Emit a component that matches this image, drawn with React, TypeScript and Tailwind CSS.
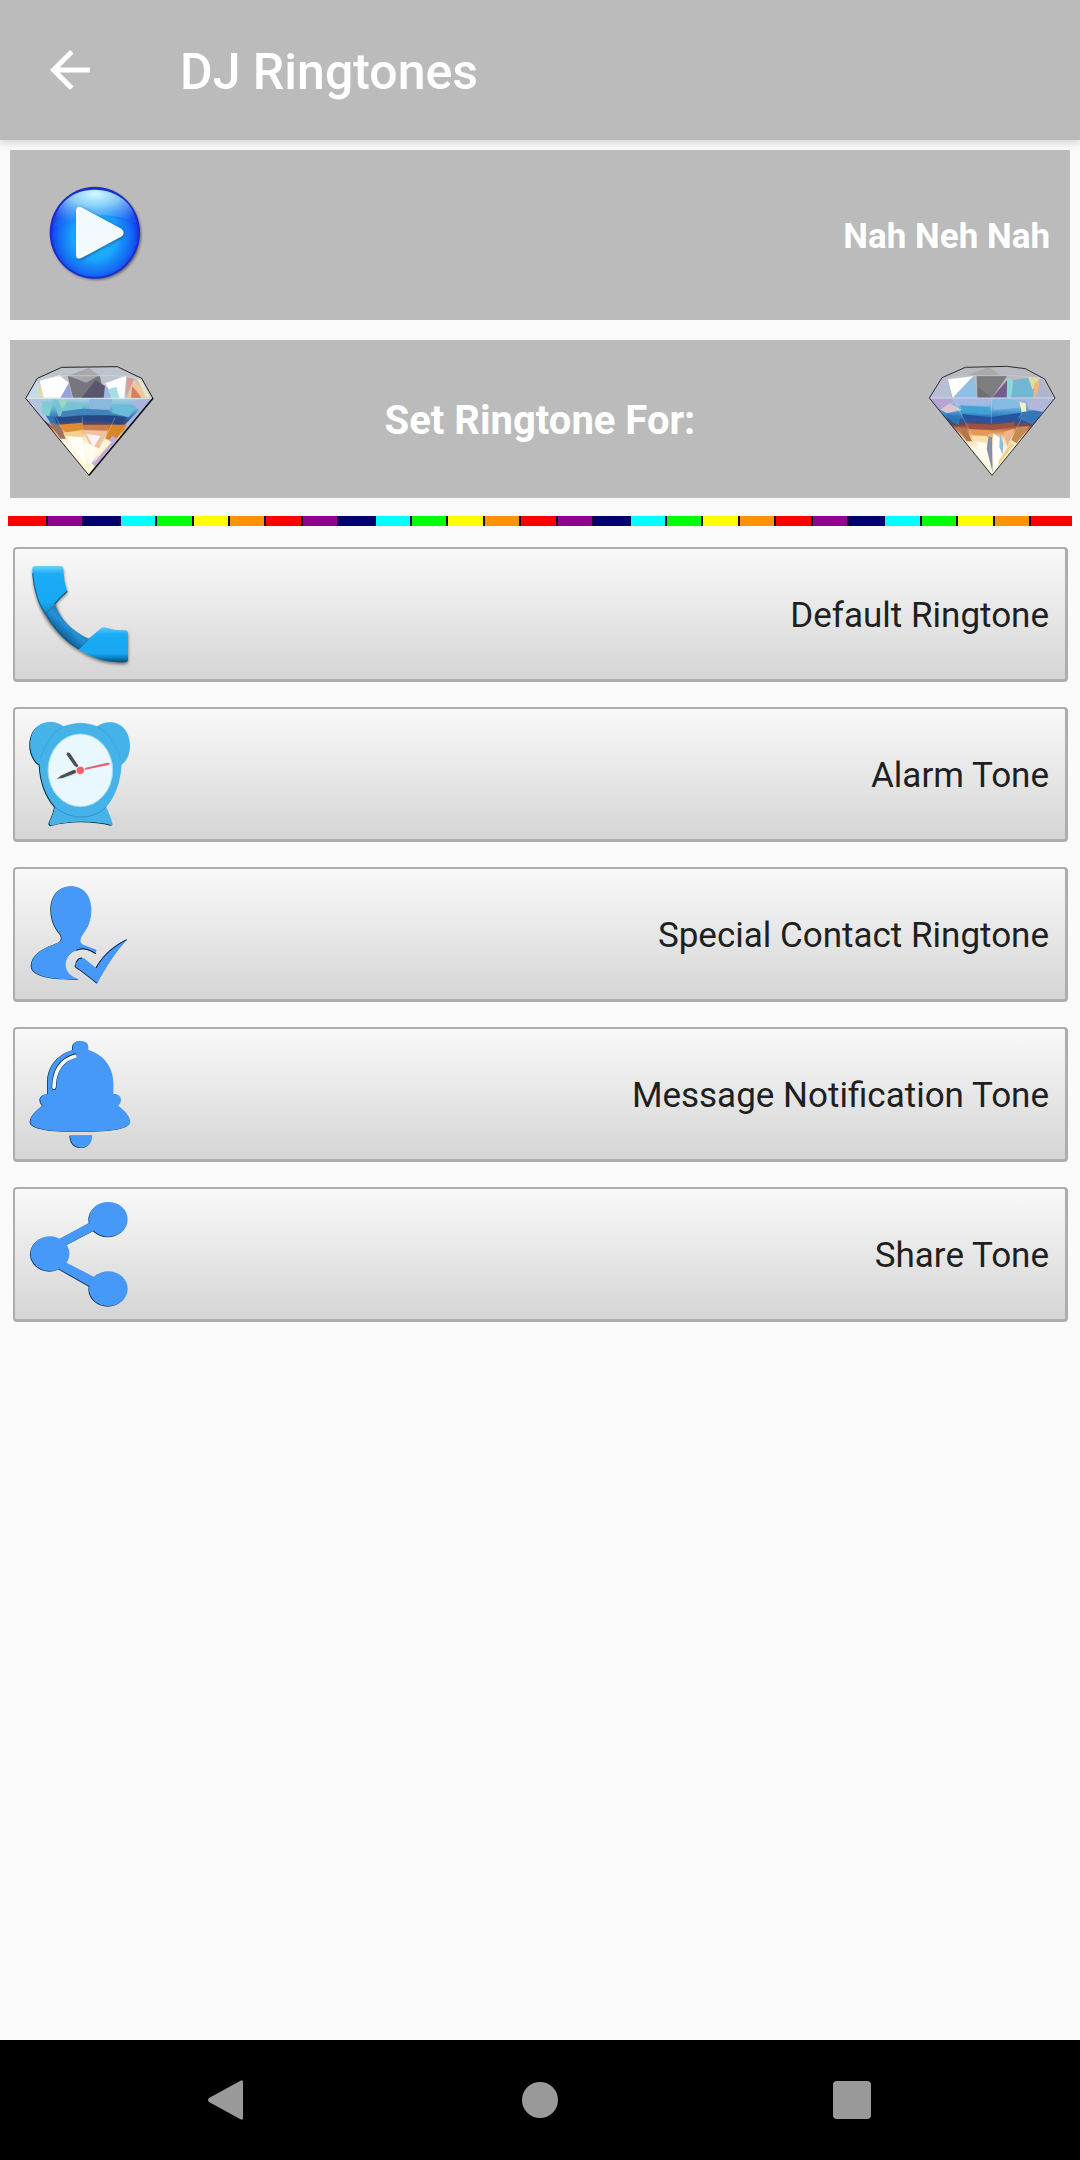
import type { ReactNode } from "react";

/** Repeating colours of the divider strip */
const RAINBOW = [
  "bg-[#ff0000]",
  "bg-[#920092]",
  "bg-[#000070]",
  "bg-[#00ffff]",
  "bg-[#00ff00]",
  "bg-[#ffff00]",
  "bg-[#ff9200]",
];

function PlayIcon() {
  return (
    <svg viewBox="144 138 285 294" className="h-[98px] w-[95px]" aria-hidden>
      <defs>
        <radialGradient id="play-ball" cx="0.5" cy="0.55" r="0.52">
          <stop offset="0" stopColor="#22c4ff" />
          <stop offset="0.5" stopColor="#1aa4fc" />
          <stop offset="0.82" stopColor="#1468f4" />
          <stop offset="1" stopColor="#1238e8" />
        </radialGradient>
        <radialGradient id="play-gloss" cx="0.5" cy="0.12" r="0.8">
          <stop offset="0" stopColor="#d2fbff" />
          <stop offset="0.4" stopColor="#9adffb" stopOpacity="0.85" />
          <stop offset="0.75" stopColor="#6cb0f8" stopOpacity="0.5" />
          <stop offset="1" stopColor="#4a8cf4" stopOpacity="0.15" />
        </radialGradient>
        <filter id="play-blur" x="-20%" y="-20%" width="140%" height="140%">
          <feGaussianBlur stdDeviation="4" />
        </filter>
      </defs>
      <ellipse cx="289" cy="283" rx="134" ry="136" fill="#000" opacity="0.5" filter="url(#play-blur)" />
      <ellipse cx="284.500" cy="278" rx="135.500" ry="138" fill="#1c2cd0" />
      <ellipse cx="284.500" cy="279" rx="129" ry="132" fill="url(#play-ball)" />
      <path
        d="M160 262C164 196 214 149 284 149S406 196 409 250C360 225 310 222 260 230C215 238 185 250 160 262Z"
        fill="url(#play-gloss)"
      />
      <path
        d="M231 216Q231 200 246 204L366 268Q378 279 367 292L246 358Q231 361 231 346Z"
        fill="#022a70"
        opacity="0.6"
        filter="url(#play-blur)"
      />
      <path d="M228 214Q228 198 243 201L364 266Q377 277 366 289L243 355Q228 359 228 344Z" fill="#f3fafe" />
    </svg>
  );
}

function LeftDiamond() {
  return (
    <svg viewBox="78 96 390 342" className="h-[114px] w-[130px] overflow-visible" aria-hidden>
      <defs>
        <clipPath id="ld-clip">
          <path d="M80 205L115 145L188 112L355 110L428 145L462 205L270 436Z" />
        </clipPath>
        <linearGradient id="ld-body" x1="0" y1="205" x2="0" y2="436" gradientUnits="userSpaceOnUse">
          <stop offset="0" stopColor="#a9cfe4" />
          <stop offset="0.12" stopColor="#6fb8d0" />
          <stop offset="0.22" stopColor="#3f84bd" />
          <stop offset="0.29" stopColor="#2a4f94" />
          <stop offset="0.34" stopColor="#6a4352" />
          <stop offset="0.4" stopColor="#d9822f" />
          <stop offset="0.48" stopColor="#f8d79d" />
          <stop offset="0.6" stopColor="#fffaf0" />
          <stop offset="1" stopColor="#fdf4c0" />
        </linearGradient>
        <filter id="ld-soft">
          <feGaussianBlur stdDeviation="1.500" />
        </filter>
      </defs>
      <g clipPath="url(#ld-clip)">
        <path d="M60 90H480V206H60Z" fill="#bfc3cc" />
        <path d="M60 205H480V440H60Z" fill="url(#ld-body)" />
        <g filter="url(#ld-soft)">
          <path d="M80 205L110 148L126 165L130 205Z" fill="#c9dbe2" />
          <path d="M118 185L126 150L134 205L124 205Z" fill="#dcdda6" />
          <path d="M122 152L182 136L210 160L188 203L134 203Z" fill="#fff" />
          <path d="M210 158L220 203H184Z" fill="#98a3dc" />
          <path d="M206 137H302L318 203H222Z" fill="#77767c" />
          <path d="M290 150L318 168V203H248Z" fill="#5c5470" />
          <path d="M206 137L262 158L300 136L270 114Z" fill="#a8a8aa" />
          <path d="M318 160L382 137L376 205H346Z" fill="#fcfeff" />
          <path d="M318 165L352 205H314Z" fill="#9db7de" />
          <path d="M328 178L352 170L362 205H336Z" fill="#a5dfe5" />
          <path d="M384 140L406 146L380 200Z" fill="#dc9a98" />
          <path d="M406 148L448 203H384Z" fill="#efc79b" />
          <path d="M400 168L428 204H396Z" fill="#d77d62" />
          <path d="M414 146L428 150L454 203L440 200Z" fill="#e7e6c4" />
          <path d="M80 205L135 208L160 290L120 258Z" fill="#b5c4e2" />
          <path d="M128 212L160 222L150 262L128 248Z" fill="#7ed0d0" />
          <path d="M160 208L252 222L246 250L180 262Z" fill="#79c4d4" />
          <path d="M176 210L206 212L190 236Z" fill="#9dd7bd" />
          <path d="M270 206L340 208L330 246L272 240Z" fill="#8cb8dc" />
          <path d="M340 222L420 226L388 262L340 248Z" fill="#6bbcd8" />
          <path d="M392 214L462 205L378 306L370 292L420 240Z" fill="#a9b5dc" />
          <path d="M140 256L180 268L178 290L156 282Z" fill="#2f74b4" />
          <path d="M150 276L184 288L200 326L184 326Z" fill="#9c7362" />
          <path d="M166 262L250 248L340 256L384 262L366 286L330 276L250 272L172 280Z" fill="#274a86" />
          <path d="M190 244L250 236L330 240L340 256L250 256L184 262Z" fill="#3f82bc" />
          <path d="M178 284L250 278L252 314L208 312Z" fill="#dc8c34" />
          <path d="M194 308L250 300L252 322L210 322Z" fill="#f6d08c" />
          <path d="M200 318L250 322L262 410Z" fill="#fffdf6" />
          <path d="M252 284L334 284L322 304L254 304Z" fill="#c87e4c" />
          <path d="M252 300L326 302L300 356L270 340Z" fill="#efc2a0" />
          <path d="M262 312L304 318L284 352Z" fill="#fdf2f8" />
          <path d="M258 340L292 356L272 424Z" fill="#fffdf0" />
          <path d="M334 284L384 284L348 334L318 326Z" fill="#d8862e" />
          <path d="M340 318L356 326L288 410L278 400Z" fill="#c2a9dc" />
          <path d="M322 330L338 336L282 400Z" fill="#fff6c8" />
        </g>
        <path d="M80 205H462" stroke="#dff0f6" strokeWidth="3" opacity="0.8" />
        <path d="M170 262L268 432M250 260L256 400M348 262L272 430" stroke="#fff" strokeWidth="2" opacity="0.35" />
        <path d="M115 147L205 137H345L428 146" stroke="#d8d8e6" strokeWidth="3" fill="none" opacity="0.6" />
      </g>
      <path d="M80 205L115 145L188 112L355 110L428 145L462 205L270 436Z" fill="none" stroke="#22232d" strokeWidth="3" />
      <path d="M462 205L270 436" stroke="#14141e" strokeWidth="5" />
    </svg>
  );
}

function RightDiamond() {
  return (
    <svg viewBox="75 96 390 342" className="h-[114px] w-[130px] overflow-visible" aria-hidden>
      <defs>
        <clipPath id="rd-clip">
          <path d="M88 204L126 143L196 112L320 109L376 116L434 147L465 204L276 436Z" />
        </clipPath>
        <linearGradient id="rd-body" x1="0" y1="204" x2="0" y2="436" gradientUnits="userSpaceOnUse">
          <stop offset="0" stopColor="#b4b4dc" />
          <stop offset="0.1" stopColor="#7bbcdd" />
          <stop offset="0.2" stopColor="#3f8fcd" />
          <stop offset="0.29" stopColor="#26559c" />
          <stop offset="0.35" stopColor="#75444c" />
          <stop offset="0.42" stopColor="#d98548" />
          <stop offset="0.52" stopColor="#f6d9a6" />
          <stop offset="0.68" stopColor="#fffbee" />
          <stop offset="1" stopColor="#fdf5c8" />
        </linearGradient>
        <filter id="rd-soft">
          <feGaussianBlur stdDeviation="1.500" />
        </filter>
      </defs>
      <g clipPath="url(#rd-clip)">
        <path d="M60 90H480V206H60Z" fill="#b9bac0" />
        <path d="M60 204H480V440H60Z" fill="url(#rd-body)" />
        <g filter="url(#rd-soft)">
          <path d="M88 204L122 148L144 150L154 204Z" fill="#b6bfd4" />
          <path d="M144 148L220 138L158 203Z" fill="#fff" />
          <path d="M222 138L232 203H160Z" fill="#8ebfe4" />
          <path d="M230 137H322L276 203H232Z" fill="#7d7d7f" />
          <path d="M196 137L268 112L300 136Z" fill="#a9a9aa" />
          <path d="M234 170L274 203H234Z" fill="#6e6e73" />
          <path d="M322 150L322 203H276Z" fill="#735c90" />
          <path d="M322 140L358 170L330 203H320Z" fill="#8fd5dc" />
          <path d="M340 150L408 140L398 203H334Z" fill="#72b7d2" />
          <path d="M384 140L420 142L398 180Z" fill="#e4d9a0" />
          <path d="M404 156L428 162L402 202Z" fill="#f1b678" />
          <path d="M420 150L462 204H410Z" fill="#aeb5cc" />
          <path d="M88 204L160 206L150 246L122 240Z" fill="#b8a4d0" />
          <path d="M122 238L150 220L186 240L140 250Z" fill="#d9c4d0" />
          <path d="M160 206L272 208L270 226L170 228Z" fill="#a6b9e4" />
          <path d="M180 226L270 232V254L188 246Z" fill="#3fa3d6" />
          <path d="M278 206L340 206L366 232L280 240Z" fill="#84bbe2" />
          <path d="M136 250L180 262L176 286L158 276Z" fill="#2c78b4" />
          <path d="M186 252L270 262L364 248L350 270L276 278L192 270Z" fill="#27549f" />
          <path d="M358 216L376 220L380 248L366 250Z" fill="#fff0c4" />
          <path d="M366 246L430 238L400 284L366 270Z" fill="#3477b9" />
          <path d="M384 212L464 204L430 246L386 238Z" fill="#b2b6d8" />
          <path d="M168 290L200 298L216 334L200 334Z" fill="#b5764d" />
          <path d="M196 280L272 284L346 276L340 292L276 300L206 296Z" fill="#9c5243" />
          <path d="M206 298L272 302L262 320L216 318Z" fill="#e69a54" />
          <path d="M214 316L262 318L256 348L232 344Z" fill="#fbdfae" />
          <path d="M226 334L258 338L270 410Z" fill="#fffdf0" />
          <path d="M266 318L276 322L278 428L260 356Z" fill="#8790a6" />
          <path d="M280 310L304 326L310 392L280 428Z" fill="#fffefa" />
          <path d="M300 312L310 342L308 374L298 350Z" fill="#8dbdd8" />
          <path d="M310 306L344 296L322 352Z" fill="#f0b58b" />
          <path d="M350 292L388 288L350 340L334 330Z" fill="#c68b52" />
          <path d="M330 340L342 344L292 412L296 392Z" fill="#f8cf86" />
        </g>
        <path d="M88 204H465" stroke="#d6dcf0" strokeWidth="3" opacity="0.8" />
        <path d="M160 206L274 432M274 208V280M366 262L282 430" stroke="#fff" strokeWidth="2" opacity="0.35" />
        <path d="M126 145L196 137H340L434 147" stroke="#cfcfd8" strokeWidth="3" fill="none" opacity="0.6" />
      </g>
      <path
        d="M88 204L126 143L196 112L320 109L376 116L434 147L465 204L276 436Z"
        fill="none"
        stroke="#2c2d36"
        strokeWidth="3"
      />
    </svg>
  );
}

function RowIcon({ children }: { children: ReactNode }) {
  return (
    <svg viewBox="87 57 309 330" className="h-[110px] w-[103px] shrink-0 overflow-visible" aria-hidden>
      {children}
    </svg>
  );
}

function PhoneIcon() {
  return (
    <RowIcon>
      <defs>
        <linearGradient id="phone-bar" x1="200" y1="225" x2="160" y2="270" gradientUnits="userSpaceOnUse">
          <stop offset="0" stopColor="#1c78b8" />
          <stop offset="0.4" stopColor="#2492d8" />
          <stop offset="1" stopColor="#0c5a92" />
        </linearGradient>
        <linearGradient id="phone-ear" x1="0" y1="78" x2="0" y2="225" gradientUnits="userSpaceOnUse">
          <stop offset="0" stopColor="#6fd0fa" />
          <stop offset="0.16" stopColor="#1aacf6" />
          <stop offset="0.75" stopColor="#18a8f4" />
          <stop offset="1" stopColor="#0c84c8" />
        </linearGradient>
        <linearGradient id="phone-mouth" x1="0" y1="260" x2="0" y2="368" gradientUnits="userSpaceOnUse">
          <stop offset="0" stopColor="#62ccfa" />
          <stop offset="0.22" stopColor="#1aacf6" />
          <stop offset="0.75" stopColor="#18a6f0" />
          <stop offset="0.88" stopColor="#0c78b8" />
          <stop offset="1" stopColor="#06486e" />
        </linearGradient>
        <filter id="phone-blur" x="-20%" y="-20%" width="140%" height="140%">
          <feGaussianBlur stdDeviation="4" />
        </filter>
      </defs>
      <path
        d="M97 86Q97 78 106 78H182Q190 78 190 88Q191 125 202 154L168 186C180 235 215 275 266 296L312 262Q345 272 376 271Q384 272 384 282V358Q384 367 374 367C320 369 275 355 236 328C185 300 140 245 122 205C105 165 97 130 97 86Z"
        transform="translate(1 6)"
        fill="#000"
        opacity="0.45"
        filter="url(#phone-blur)"
      />
      <path d="M136 222L166 196C180 235 218 275 266 296L236 328C195 304 158 262 136 222Z" fill="url(#phone-bar)" />
      <path
        d="M97 86Q97 78 106 78H182Q190 78 190 88Q191 125 202 154Q180 172 166 190L136 224C110 185 97 130 97 86Z"
        fill="url(#phone-ear)"
      />
      <path
        d="M266 296L304 264Q310 260 318 263Q345 272 376 271Q384 272 384 282V358Q384 367 374 367C320 369 275 355 236 328Z"
        fill="url(#phone-mouth)"
      />
      <path d="M98 100C101 150 118 197 137 222C158 262 195 304 237 327" fill="none" stroke="#08557f" strokeWidth="4" opacity="0.7" />
      <path d="M202 154Q180 172 164 192" fill="none" stroke="#075078" strokeWidth="4" opacity="0.8" />
      <path d="M136 223L166 192M237 327L268 295" fill="none" stroke="#0a5f96" strokeWidth="3" opacity="0.7" />
    </RowIcon>
  );
}

function AlarmIcon() {
  const body =
    "M190 80C167 62 137 62 114 78C86 100 85 150 102 176C107 186 113 191 119 194C121 245 138 290 165 320C161 342 153 355 148 370Q149 378 157 376C210 361 280 361 338 376C334 355 326 340 318 322C345 290 362 245 364 194C394 175 397 120 375 90C355 64 318 60 292 80C258 66 224 66 190 80Z";
  return (
    <RowIcon>
      <path d={body} transform="translate(-3 2)" fill="#08344c" />
      <path d={body} transform="translate(1 -1)" fill="#8ccdf0" />
      <path d={body} fill="#45b2e8" />
      <path d="M164 320C210 362 278 360 318 322" fill="none" stroke="#2f93c8" strokeWidth="3" />
      <path d="M190 80C165 92 132 130 122 176M292 80C325 98 350 135 362 180" fill="none" stroke="#3ba4dc" strokeWidth="4" opacity="0.6" />
      <ellipse cx="241" cy="211" rx="97" ry="109" fill="#e9f8fe" stroke="#9adbf6" strokeWidth="3" />
      <path d="M203 157L199 163L222 196L235 206L234 196L210 160Z" fill="#4d4d4f" />
      <path d="M170 236L185 226L220 210L232 211L226 220L188 234Z" fill="#4d4d4f" />
      <path d="M212 226L178 239L228 222Z" fill="#aac0c8" />
      <path d="M254 204L322 188L331 190L325 195L256 209Z" fill="#e2646e" />
      <circle cx="241" cy="211" r="14" fill="#f7e4e6" />
      <circle cx="241" cy="211" r="11" fill="#ee626c" />
    </RowIcon>
  );
}

const CONTACT_BODY =
  "M213 79C175 79 153 108 153 150C153 185 168 208 182 225C190 243 178 247 160 254C120 268 94 290 94 318C96 348 150 360 238 358C212 350 196 335 197 312C199 285 225 264 252 266C268 268 276 274 286 280L290 270C275 262 254 260 244 250C238 240 243 230 254 215C268 196 274 176 274 148C273 108 252 79 213 79Z";
const CONTACT_CHECK =
  "M241 293Q250 292 256 298L288 324C308 286 345 252 382 238C350 272 318 320 292 370C272 354 250 335 228 322Q224 316 228 310Q232 296 241 293Z";

function ContactIcon() {
  return (
    <RowIcon>
      <g transform="translate(-2 1)" fill="#07213f">
        <path d={CONTACT_BODY} />
        <path d={CONTACT_CHECK} />
      </g>
      <path d={CONTACT_BODY} fill="#4699f8" />
      <path d={CONTACT_CHECK} fill="#4699f8" />
      <path d="M229 272C240 264 262 264 288 281" fill="none" stroke="#07213f" strokeWidth="3" />
      <path d="M229 306Q236 292 246 294M288 324C308 286 345 256 380 239" fill="none" stroke="#07213f" strokeWidth="3" />
    </RowIcon>
  );
}

function BellIcon() {
  const bell =
    "M218 90V80Q220 63 242 63Q264 64 265 80V90C315 105 340 145 340 190V222Q362 222 363 239Q362 252 354 256C378 276 390 290 391 306C390 325 345 335 242 335C140 336 92 325 91 306C92 288 105 276 128 256Q120 250 120 238Q122 224 143 222V185C144 140 172 104 218 90Z";
  const clapper = "M210 346H277C276 370 264 383 244 383C224 383 211 370 210 346Z";
  return (
    <RowIcon>
      <g transform="translate(-2 1)" fill="#07213f">
        <path d={bell} />
        <path d={clapper} />
      </g>
      <path d={bell} fill="#4699f8" />
      <path d={clapper} fill="#4699f8" />
      <path d="M224 108C185 120 162 150 162 203" fill="none" stroke="#07213f" strokeWidth="14" strokeLinecap="round" />
      <path d="M225 109C187 120 163 150 162 202" fill="none" stroke="#f6f9fc" strokeWidth="11" strokeLinecap="round" />
    </RowIcon>
  );
}

function ShareGlyph() {
  return (
    <>
      <path d="M176 178L268 128L284 150L200 194ZM200 248L284 292L268 318L176 266Z" />
      <ellipse cx="325" cy="118" rx="58" ry="52" />
      <ellipse cx="325" cy="326" rx="58" ry="52" />
      <ellipse cx="150" cy="221" rx="58" ry="52" />
    </>
  );
}

function ShareIcon() {
  return (
    <RowIcon>
      <g transform="translate(-2 2)" fill="#12345c">
        <ShareGlyph />
      </g>
      <g fill="#4699f8">
        <ShareGlyph />
      </g>
    </RowIcon>
  );
}

const ACTIONS = [
  { label: "Default Ringtone", Icon: PhoneIcon },
  { label: "Alarm Tone", Icon: AlarmIcon },
  { label: "Special Contact Ringtone", Icon: ContactIcon },
  { label: "Message Notification Tone", Icon: BellIcon },
  { label: "Share Tone", Icon: ShareIcon },
];

function RainbowDivider() {
  return (
    <div className="mx-2 flex h-[10px]" aria-hidden>
      <span className="w-[38px] bg-[#ff0000]" />
      {Array.from({ length: 27 }, (_, i) => (
        <span key={i} className={`flex-1 border-l-2 border-[#1c0838] ${RAINBOW[(i + 1) % 7]}`} />
      ))}
      <span className="w-[43px] border-l-2 border-[#1c0838] bg-[#ff0000]" />
    </div>
  );
}

export default function App() {
  return (
    <div className="flex min-h-screen flex-col bg-[#fafafa] font-['Roboto',sans-serif]">
      <header className="flex h-[140px] items-center gap-20 bg-[#bbbbbb] pl-10 text-white shadow-[0_3px_8px_rgba(0,0,0,0.16)]">
        <button type="button" aria-label="Back">
          <svg viewBox="0 0 24 24" className="size-[60px]" fill="currentColor" aria-hidden>
            <path d="M20 11H7.83l5.59-5.59L12 4l-8 8 8 8 1.41-1.41L7.83 13H20v-2z" />
          </svg>
        </button>
        <h1 className="pt-1 text-[50px] leading-[60px] font-medium">DJ Ringtones</h1>
      </header>

      <main className="flex flex-1 flex-col pt-[10px]">
        <section className="mx-[10px] flex h-[170px] items-center justify-between bg-[#bbbbbb] pr-5 pl-[38px]">
          <button type="button" aria-label="Play">
            <PlayIcon />
          </button>
          <span className="pt-1 text-[35px] font-bold text-white">Nah Neh Nah</span>
        </section>

        <section className="mx-[10px] mt-5 mb-[18px] flex h-[158px] items-center justify-between bg-[#bbbbbb] px-[15px]">
          <LeftDiamond />
          <h2 className="pt-1 text-[40px] font-bold text-white">Set Ringtone For:</h2>
          <RightDiamond />
        </section>

        <RainbowDivider />

        <div className="mt-[21px] mr-3 ml-[13px] flex flex-col gap-[25px]">
          {ACTIONS.map(({ label, Icon }) => (
            <button
              key={label}
              type="button"
              className="flex h-[135px] items-center justify-between rounded-[4px] border-2 border-r-3 border-b-3 border-[#adadad] bg-linear-to-b from-[#f9f9f9] to-[#d5d5d5] pr-4 pl-[14px] text-[35px] text-[#1f1f1f]"
            >
              <Icon />
              <span className="pt-1">{label}</span>
            </button>
          ))}
        </div>
      </main>

      <nav className="grid h-[120px] grid-cols-3 items-center justify-items-center bg-black px-[72px] text-[#999999]">
        <button type="button" aria-label="Back">
          <svg viewBox="0 0 40 40" className="size-10" fill="currentColor" aria-hidden>
            <path d="M1 18L32 1Q35 -1 35 2V38Q35 41 32 39L1 22Q-1 20 1 18Z" />
          </svg>
        </button>
        <button type="button" aria-label="Home" className="size-9 rounded-full bg-current" />
        <button type="button" aria-label="Recent apps" className="size-[38px] rounded-[4px] bg-current" />
      </nav>
    </div>
  );
}
